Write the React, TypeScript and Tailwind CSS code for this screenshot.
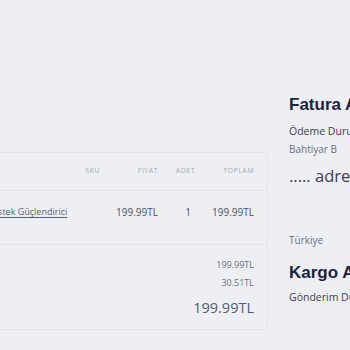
import * as React from 'react';

const items = [
    {name: 'Kirpik ve Kaş Besleyici Destek Güçlendirici', sku: '', price: '199.99TL', qty: 1, total: '199.99TL'},
];

function OrderTable() {
    return (
        <div className="w-[418px] shrink-0 ml-[-150px] mt-[59px] border border-[#e2e4eb] rounded-sm">
            <div className="grid grid-cols-[1fr_30px_62px_34px_58px] items-center h-[38px] pr-[13px] pl-4 border-b border-[#e2e4eb] text-[7px] tracking-[0.07em] uppercase text-[#a3a7b1]">
                <span />
                <span className="text-right">SKU</span>
                <span className="text-right pr-[4px]">FİYAT</span>
                <span className="text-right pr-[1px]">ADET</span>
                <span className="text-right">TOPLAM</span>
            </div>

            {items.map((item) => (
                <div
                    key={item.name}
                    className="grid grid-cols-[1fr_30px_62px_34px_58px] items-start h-[54px] pt-[14px] pr-[13px] pl-4 border-b border-[#e2e4eb] text-[10px] text-[#4b5061]"
                >
                    <div className="flex items-center gap-2 whitespace-nowrap">
                        <span className="w-[18px] h-[10px] shrink-0" />
                        <a className="text-[9px] text-[#5a5f70] underline underline-offset-2">{item.name}</a>
                    </div>
                    <span className="text-right">{item.sku}</span>
                    <span className="text-right pr-[4px]">{item.price}</span>
                    <span className="text-right pr-[5px]">{item.qty}</span>
                    <span className="text-right">{item.total}</span>
                </div>
            ))}

            <div className="flex flex-col items-end pr-[13px] pt-[11px] pb-[11px] text-[#6b7080]">
                <span className="text-[9px] leading-[18px]">199.99TL</span>
                <span className="text-[9px] leading-[18px]">30.51TL</span>
                <span className="text-[14.5px] leading-[20px] mt-[6px] text-[#555a6b]">199.99TL</span>
            </div>
        </div>
    );
}

function AddressColumn() {
    return (
        <div className="ml-[21px] shrink-0 flex flex-col whitespace-nowrap text-[#3b4052]">
            <h3 className="font-['Liberation_Sans',sans-serif] font-bold text-[17px] leading-[24px] text-[#1c2442]">Fatura Adresi</h3>
            <p className="mt-[7px] text-[10.5px] leading-[14px]">Ödeme Durumu: Ödendi</p>
            <p className="mt-[4px] text-[10px] leading-[14px] text-[#6b7080]">Bahtiyar B</p>
            <p className="mt-[10px] text-[16.5px] leading-[20px]">..... adres</p>
            <p className="mt-[47px] text-[10px] leading-[14px] text-[#6b7080]">Türkiye</p>
            <h3 className="mt-[14px] font-['Liberation_Sans',sans-serif] font-bold text-[17px] leading-[24px] text-[#1c2442]">Kargo Adresi</h3>
            <p className="mt-[5px] text-[10.5px] leading-[14px]">Gönderim Durumu</p>
        </div>
    );
}

export default function App() {
    return (
        <div className="w-[350px] h-[350px] overflow-hidden bg-[#eeeff4] font-['Open_Sans',sans-serif]">
            <div className="flex items-start pt-[93px]">
                <OrderTable />
                <AddressColumn />
            </div>
        </div>
    );
}
